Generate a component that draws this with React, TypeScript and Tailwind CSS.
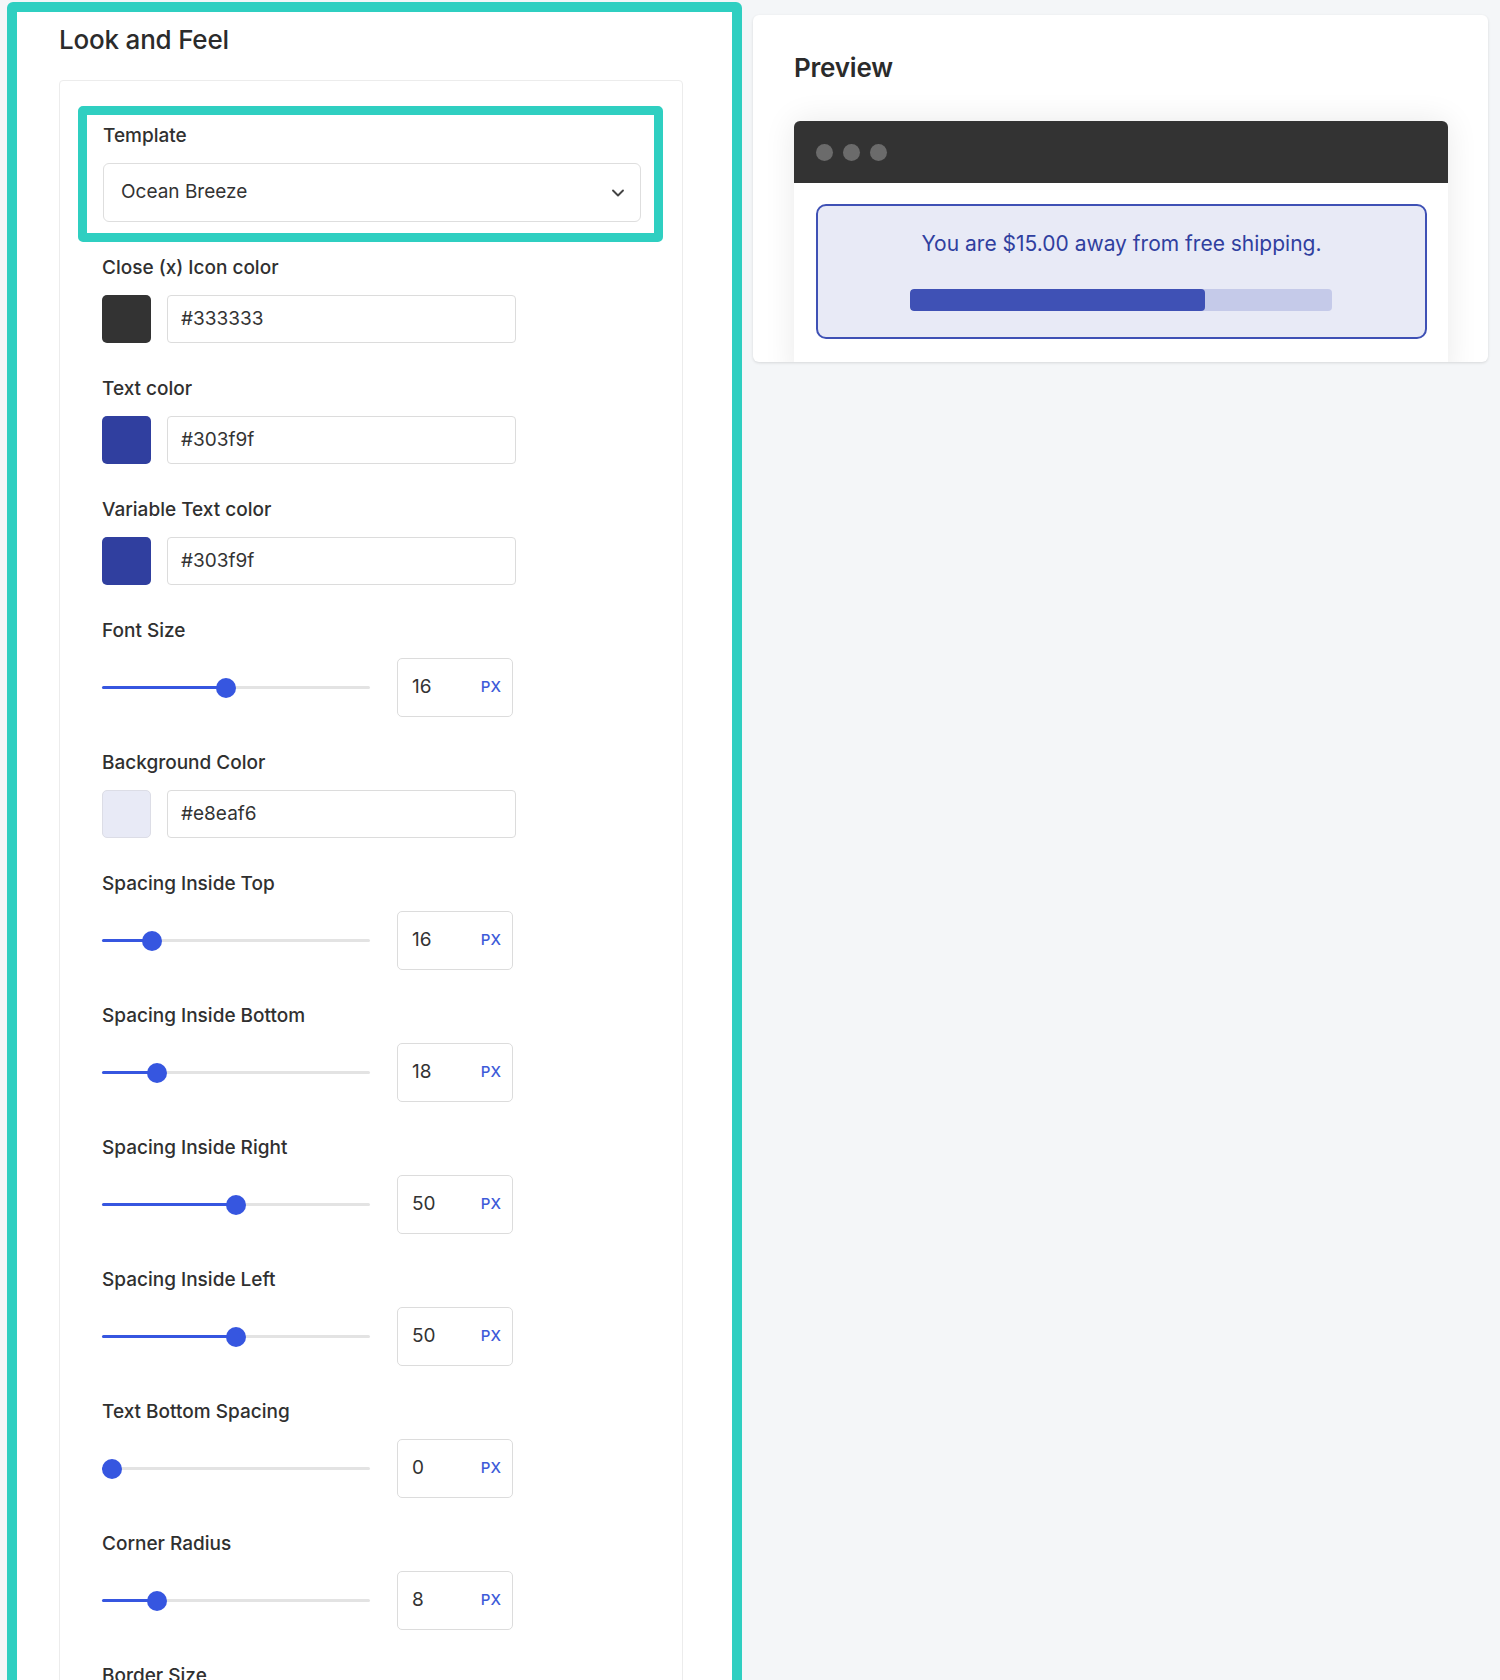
import { ChevronDown } from "lucide-react";

const colorRows = [
  { label: "Close (x) Icon color", value: "#333333", swatch: "bg-[#333333]" },
  { label: "Text color", value: "#303f9f", swatch: "bg-[#303f9f]" },
  { label: "Variable Text color", value: "#303f9f", swatch: "bg-[#303f9f]" },
];

type Row =
  | { kind: "color"; label: string; value: string; swatch: string }
  | { kind: "slider"; label: string; value: string; pct: number };

const rows: Row[] = [
  ...colorRows.map((c) => ({ kind: "color" as const, ...c })),
  { kind: "slider", label: "Font Size", value: "16", pct: 46 },
  { kind: "color", label: "Background Color", value: "#e8eaf6", swatch: "bg-[#e8eaf6] border border-[#dcdde6]" },
  { kind: "slider", label: "Spacing Inside Top", value: "16", pct: 16 },
  { kind: "slider", label: "Spacing Inside Bottom", value: "18", pct: 18 },
  { kind: "slider", label: "Spacing Inside Right", value: "50", pct: 50 },
  { kind: "slider", label: "Spacing Inside Left", value: "50", pct: 50 },
  { kind: "slider", label: "Text Bottom Spacing", value: "0", pct: 0 },
  { kind: "slider", label: "Corner Radius", value: "8", pct: 18 },
  { kind: "slider", label: "Border Size", value: "2", pct: 10 },
  { kind: "color", label: "Border Color", value: "#3f51b5", swatch: "bg-[#3f51b5]" },
];

function Label({ children }: { children: React.ReactNode }) {
  return <p className="text-[19px] leading-[20px] font-medium text-[#303030] mb-[17px]">{children}</p>;
}

function Slider({ pct }: { pct: number }) {
  // thumb travels 248px inside a 268px track
  const left = 10 + (pct / 100) * 248;
  return (
    <div className="relative w-[268px] h-[20px] flex items-center">
      <div className="w-full h-[3px] rounded-full bg-[#e3e3e3]" />
      <div className="absolute left-0 h-[3px] rounded-full bg-[#3656e0]" style={{ width: left }} />
      <div
        className="absolute w-[20px] h-[20px] rounded-full bg-[#3656e0] -translate-x-1/2"
        style={{ left }}
      />
    </div>
  );
}

function FormRow({ row }: { row: Row }) {
  if (row.kind === "color") {
    return (
      <div className="mb-[36px]">
        <Label>{row.label}</Label>
        <div className="flex items-center gap-[16px]">
          <div className={`w-[49px] h-[48px] rounded-[5px] ${row.swatch}`} />
          <div className="w-[349px] h-[48px] rounded-[4px] border border-[#dcdcdc] flex items-center pl-[13px] text-[19px] text-[#333]">
            {row.value}
          </div>
        </div>
      </div>
    );
  }
  return (
    <div className="mb-[36px]">
      <Label>{row.label}</Label>
      <div className="flex items-center">
        <Slider pct={row.pct} />
        <div className="ml-[27px] w-[116px] h-[59px] rounded-[5px] border border-[#dcdcdc] flex items-center justify-between pl-[14px] pr-[11px]">
          <span className="text-[19px] text-[#333]">{row.value}</span>
          <span className="text-[15px] font-medium text-[#3d5bd9]">PX</span>
        </div>
      </div>
    </div>
  );
}

export default function App() {
  return (
    <div className="w-[1500px] h-[1680px] overflow-hidden bg-[#f4f6f8] flex items-start font-['Inter',sans-serif]">
      {/* Look and Feel */}
      <div className="ml-[7px] mt-[2px] w-[735px] border-[10px] border-[#2fcfc1] rounded-[6px] bg-white pl-[42px] pt-[12px] pb-[80px] shrink-0">
        <h2 className="text-[26px] leading-[32px] font-medium text-[#2b2b2b] tracking-[-0.2px]">Look and Feel</h2>
        <div className="mt-[24px] w-[624px] border border-[#ececec] rounded-[4px] pl-[18px] pt-[25px] pb-[20px]">
          <div className="w-[585px] border-[9px] border-[#2fcfc1] rounded-[5px] pl-[16px] pr-[13px] pt-[11px] pb-[11px]">
            <Label>Template</Label>
            <div className="h-[59px] rounded-[6px] border border-[#dedede] flex items-center justify-between pl-[17px] pr-[12px]">
              <span className="text-[19px] text-[#333]">Ocean Breeze</span>
              <ChevronDown size={20} strokeWidth={2.25} className="text-[#444]" />
            </div>
          </div>
          <div className="pl-[24px] pt-[16px]">
            {rows.map((r) => (
              <FormRow key={r.label} row={r} />
            ))}
          </div>
        </div>
      </div>

      {/* Preview */}
      <div className="ml-[11px] mt-[15px] w-[735px] h-[347px] overflow-hidden rounded-[6px] bg-white shadow-[0_1px_3px_rgba(0,0,0,0.12)] pl-[41px] pt-[37px] shrink-0">
        <h2 className="text-[26px] leading-[32px] font-semibold text-[#2b2b2b] tracking-[-0.2px]">Preview</h2>
        <div className="mt-[37px] w-[654px] rounded-t-[6px] bg-white shadow-[0_0_32px_rgba(0,0,0,0.09)]">
          <div className="h-[62px] rounded-t-[6px] bg-[#333333] flex items-center gap-[10px] pl-[22px]">
            <span className="w-[17px] h-[17px] rounded-full bg-[#6b6b6b]" />
            <span className="w-[17px] h-[17px] rounded-full bg-[#6b6b6b]" />
            <span className="w-[17px] h-[17px] rounded-full bg-[#6b6b6b]" />
          </div>
          <div className="pt-[21px] px-[22px] pb-[40px]">
            <div className="w-[611px] border-2 border-[#3f51b5] rounded-[10px] bg-[#e8eaf6] pt-[26px] pb-[26px]">
              <p className="text-center text-[21px] leading-[24px] text-[#303f9f]">
                You are $15.00 away from free shipping.
              </p>
              <div className="mt-[33px] ml-[92px] w-[422px] h-[22px] rounded-[4px] bg-[#c5cae9] overflow-hidden">
                <div className="h-full w-[70%] rounded-[4px] bg-[#3f51b5]" />
              </div>
            </div>
          </div>
        </div>
      </div>
    </div>
  );
}
